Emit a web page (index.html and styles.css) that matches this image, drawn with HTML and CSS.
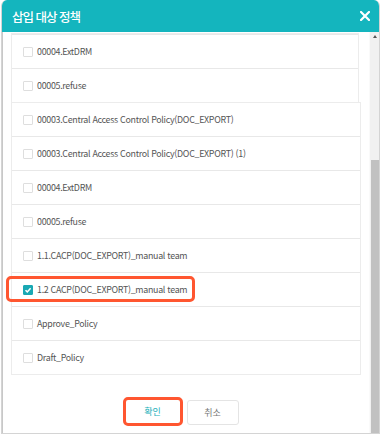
FILE: index.html
```html
<!DOCTYPE html>
<html lang="ko">
<head>
    <meta charset="UTF-8">
    <meta name="viewport" content="width=device-width, initial-scale=1.0">
    <title>삽입 대상 정책</title>
    <link rel="stylesheet" href="styles.css">
</head>
<body>
    <div class="dialog">
        <div class="dialog-header">
            <h1>삽입 대상 정책</h1>
            <span class="close">
                <svg width="10" height="10" viewBox="0 0 10 10"><path d="M1 1L9 9M9 1L1 9" stroke="#fff" stroke-width="2.2" stroke-linecap="square"/></svg>
            </span>
        </div>

        <div class="dialog-body">
            <div class="content">
                <ul class="policy-list top">
                    <li><span class="check"></span>00004.ExtDRM</li>
                    <li><span class="check"></span>00005.refuse</li>
                </ul>

                <ul class="policy-list main">
                    <li><span class="check"></span>00003.Central Access Control Policy(DOC_EXPORT)</li>
                    <li><span class="check"></span>00003.Central Access Control Policy(DOC_EXPORT) (1)</li>
                    <li><span class="check"></span>00004.ExtDRM</li>
                    <li><span class="check"></span>00005.refuse</li>
                    <li><span class="check"></span>1.1.CACP(DOC_EXPORT)_manual team</li>
                    <li><span class="mark"><span class="check checked"><svg width="8" height="8" viewBox="0 0 8 8"><path d="M1.5 4.2L3.3 5.9L6.6 2.3" fill="none" stroke="#fff" stroke-width="1.5"/></svg></span>1.2 CACP(DOC_EXPORT)_manual team</span></li>
                    <li><span class="check"></span>Approve_Policy</li>
                    <li><span class="check"></span>Draft_Policy</li>
                </ul>

                <div class="buttons">
                    <button class="button ok">확인</button>
                    <button class="button cancel">취소</button>
                </div>
            </div>

            <div class="scrollbar">
                <span class="arrow"></span>
                <div class="thumb"></div>
            </div>
        </div>
    </div>
</body>
</html>
```

FILE: styles.css
```css
body {
    margin: 0;
    background: #ffffff;
    font-family: "Noto Sans CJK KR", "Noto Sans", sans-serif;
}

.dialog {
    width: 377px;
    height: 433px;
    margin-left: 1px;
    border: 1px solid #d4d4d4;
    border-top: none;
    border-radius: 6px 6px 0 0;
    overflow: hidden;
    display: flex;
    flex-direction: column;
}

.dialog-header {
    height: 32px;
    background: #14b5be;
    display: flex;
    align-items: center;
    justify-content: space-between;
    padding: 0 9px 0 10px;
    flex-shrink: 0;
}

.dialog-header h1 {
    margin: 0;
    color: #fff;
    font-size: 12.5px;
    font-weight: 500;
    letter-spacing: -1px;
}

.close {
    display: flex;
}

.dialog-body {
    flex: 1;
    display: flex;
    min-height: 0;
}

.content {
    flex: 1;
    padding: 1px 7px 0 8px;
    border-left: 1px solid #c8c8c8;
}

.policy-list {
    list-style: none;
    margin: 0;
    padding: 0;
    background: #fff;
    border: 1px solid #ececec;
}

.policy-list.top {
    width: 346px;
    border-bottom: none;
}

.policy-list.main {
    width: 348px;
}

.policy-list li {
    height: 33px;
    border-top: 1px solid #e8e8e8;
    display: flex;
    align-items: center;
    padding-left: 11px;
    font-size: 8.9px;
    color: #555;
    letter-spacing: -0.3px;
}

.policy-list li:first-child {
    border-top: none;
}

.policy-list.top li:first-child {
    border-top: 1px solid #e8e8e8;
}

.check {
    width: 8px;
    height: 8px;
    border: 1px solid #dedede;
    border-radius: 1px;
    margin-right: 4px;
    display: inline-flex;
    align-items: center;
    justify-content: center;
    flex-shrink: 0;
}

.check.checked {
    background: #19a8b3;
    border-color: #19a8b3;
}

.mark {
    display: inline-flex;
    align-items: center;
    position: relative;
}

.mark::after {
    content: "";
    position: absolute;
    left: -17px;
    right: -8px;
    top: -7px;
    bottom: -6px;
    border: 3px solid #ff5630;
    border-radius: 5px;
}

.buttons {
    display: flex;
    justify-content: center;
    gap: 4px;
    padding-top: 22px;
    padding-right: 12px;
}

.button {
    width: 52px;
    height: 25px;
    margin-top: 3px;
    background: #fff;
    border: 1px solid #e4e4e4;
    border-radius: 3px;
    font-family: inherit;
    font-size: 9px;
    color: #777;
    padding: 0;
}

.button.ok {
    color: #21b0b9;
    border: 3px solid #ff5630;
    border-radius: 5px;
    width: 60px;
    height: 29px;
    margin-top: 0;
}

.scrollbar {
    width: 9px;
    margin-right: 0;
    background: #f1f1f1;
    display: flex;
    flex-direction: column;
    align-items: center;
    border-left: 1px solid #fafafa;
}

.arrow {
    margin-top: 3px;
    width: 0;
    height: 0;
    border-left: 2.5px solid transparent;
    border-right: 2.5px solid transparent;
    border-bottom: 3px solid #555;
}

.thumb {
    margin-top: 122px;
    width: 8px;
    flex: 1;
    background: #c1c1c1;
}
```
